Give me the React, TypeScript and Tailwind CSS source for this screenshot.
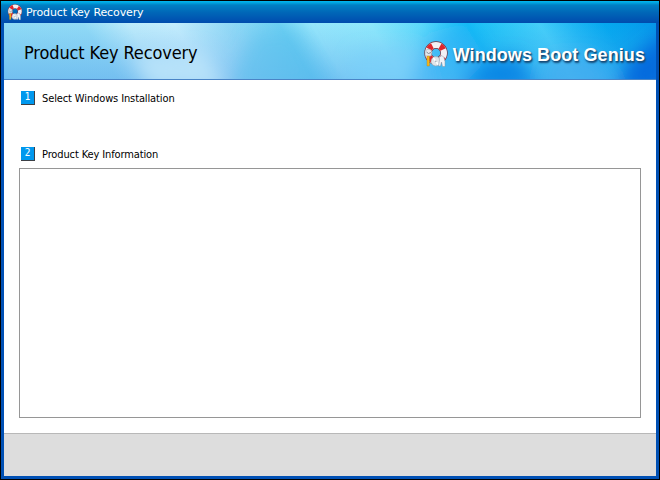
import React from "react";

function LifebuoyIcon({ size }: { size: number }) {
  return (
    <svg width={size} height={size} viewBox="0 0 26 26" className="block shrink-0">
      <circle cx="13" cy="12" r="8" fill="none" stroke="#73303c" strokeWidth="7.4" />
      <circle cx="13" cy="12" r="8" fill="none" stroke="#f3f0f4" strokeWidth="6" />
      <circle
        cx="13"
        cy="12"
        r="8"
        fill="none"
        stroke="#e0262c"
        strokeWidth="6"
        strokeDasharray="4.6 7.966"
        strokeDashoffset="-3.98"
      />
      <path d="M2 10.5l2.500-2.500 3 .5 1.500 3-1 3.500-4 .5-2-2z" fill="#e4e7ec" stroke="#8c949f" strokeWidth=".5" />
      <path d="M3.500 11l2 1.500 2.500-1" fill="none" stroke="#69737f" strokeWidth=".8" />
      <circle cx="12.800" cy="20.300" r="4.700" fill="#e2e5e9" stroke="#9da2aa" strokeWidth=".6" />
      <path d="M12.800 20.300l-2.500-3.500M12.800 20.300l2.500 3.500" stroke="#fff" strokeWidth="1.500" />
      <circle cx="12.800" cy="20.300" r=".9" fill="#a9b2bd" />
      <path d="M16 16l3-1.500 2 2 1 4v5h-2.500L18.500 21l-1 4h-2l1-6z" fill="#eff3f8" stroke="#8090a2" strokeWidth=".5" />
      <path d="M4 15h2.400v10H4z" fill="#f5b91f" stroke="#b77b0c" strokeWidth=".4" />
    </svg>
  );
}

function BannerArt() {
  return (
    <svg width="652" height="56" viewBox="0 0 652 56" preserveAspectRatio="none" className="absolute inset-0 block">
      <defs>
        <linearGradient id="base" gradientUnits="userSpaceOnUse" x1="0" y1="0" x2="652" y2="0">
          <stop offset="0" stopColor="#8ddaf5" />
          <stop offset=".12" stopColor="#90daf6" />
          <stop offset=".19" stopColor="#bdebfb" />
          <stop offset=".26" stopColor="#c4edfd" />
          <stop offset=".34" stopColor="#94daf6" />
          <stop offset=".42" stopColor="#6ed2f3" />
          <stop offset=".47" stopColor="#96e6fb" />
          <stop offset=".56" stopColor="#8ee8fc" />
          <stop offset=".64" stopColor="#5bd9fb" />
          <stop offset=".71" stopColor="#15bdf6" />
          <stop offset=".76" stopColor="#2bc6f7" />
          <stop offset=".82" stopColor="#44cef9" />
          <stop offset=".87" stopColor="#20b8f4" />
          <stop offset=".92" stopColor="#05a8ef" />
          <stop offset="1" stopColor="#0598ea" />
        </linearGradient>
        <linearGradient id="shade" x1="0" x2="0" y1="0" y2="1">
          <stop offset="0" stopColor="#4a98e8" stopOpacity="0" />
          <stop offset="1" stopColor="#4a98e8" stopOpacity=".4" />
        </linearGradient>
        <filter id="soft" x="-50%" y="-50%" width="200%" height="200%">
          <feGaussianBlur stdDeviation="9" />
        </filter>
      </defs>
      {/* Shears the vertical bands into diagonal rays. */}
      <g transform="skewX(32)">
        <rect x="-60" width="760" height="56" fill="url(#base)" />
      </g>
      <rect width="652" height="56" fill="url(#shade)" />
      <g filter="url(#soft)">
        <path d="M128 32L200 28L222 66L145 66Z" fill="#bce5fa" opacity=".85" />
        <path d="M250 10L290 6L322 66L225 66Z" fill="#58c1ee" opacity=".5" />
        <path d="M350 30L410 26L430 66L350 66Z" fill="#7cd1fb" opacity=".6" />
        <path d="M425 10L460 0L500 66L405 66Z" fill="#18a3f5" opacity=".4" />
        <path d="M455 66L480 40L514 32L535 66Z" fill="#0078e0" opacity=".75" />
        <path d="M535 66L546 34L590 34L615 66Z" fill="#42abef" opacity=".7" />
        <path d="M612 70L625 38L665 6L665 70Z" fill="#0062da" opacity=".85" />
      </g>
    </svg>
  );
}

function Step({ number, label }: { number: string; label: string }) {
  return (
    <div className="flex h-[15px] items-center">
      <div className="mr-[7px] flex h-[14px] w-[14px] items-center justify-center border-r border-b border-[#3d4045] bg-[#0098ee] font-['DejaVu_Sans_Condensed',sans-serif] text-[10px] leading-none text-white">
        {number}
      </div>
      <span className="mt-px whitespace-nowrap font-['DejaVu_Sans_Condensed',sans-serif] text-[11px] leading-[15px] tracking-[-0.12px] text-black">
        {label}
      </span>
    </div>
  );
}

export default function App() {
  return (
    <div className="flex h-[480px] w-[660px] flex-col border border-black bg-[#0050b4]">
      <header className="flex h-[22px] shrink-0 items-center bg-[linear-gradient(180deg,#00b8f0_0px,#00a0dc_2px,#0080c4_4px,#0068b8_11px,#0050b0_20px,#004cac_22px)] pl-[6px]">
        <LifebuoyIcon size={16} />
        <span className="mt-px ml-[3px] whitespace-nowrap font-['DejaVu_Sans',sans-serif] text-[11px] leading-[16px] tracking-[-0.11px] text-white">
          Product Key Recovery
        </span>
      </header>
      <main className="mx-[3px] mb-[3px] flex min-h-0 flex-1 flex-col bg-white">
        <section className="relative flex h-[57px] shrink-0 items-center overflow-hidden border-b border-[#4a84c6]">
          <BannerArt />
          <h1 className="relative mt-[3px] ml-[20px] whitespace-nowrap font-['DejaVu_Sans_Condensed',sans-serif] text-[18px] leading-6 tracking-[-0.12px] text-black">
            Product Key Recovery
          </h1>
          <div className="relative mr-[11px] ml-auto flex items-center">
            <div className="mt-[5px]">
              <LifebuoyIcon size={26} />
            </div>
            <span className="ml-[4px] mt-[8px] whitespace-nowrap font-['Liberation_Sans',Arial,sans-serif] text-[18px] leading-6 font-bold tracking-[0.08px] text-white [text-shadow:1px_1px_1px_#174c79,1px_2px_2px_#174c79]">
              Windows Boot Genius
            </span>
          </div>
        </section>
        <section className="flex min-h-0 flex-1 flex-col px-[15px] pt-[10px]">
          <div className="ml-[2px]">
            <Step number="1" label="Select Windows Installation" />
          </div>
          <div className="mt-[41px] ml-[2px]">
            <Step number="2" label="Product Key Information" />
          </div>
          <div className="mt-[7px] h-[250px] w-[622px] shrink-0 border border-[#969696] bg-white" />
        </section>
        <footer className="h-[43px] shrink-0 border-t border-[#b8b8b8] bg-[#dddddd]" />
      </main>
    </div>
  );
}
